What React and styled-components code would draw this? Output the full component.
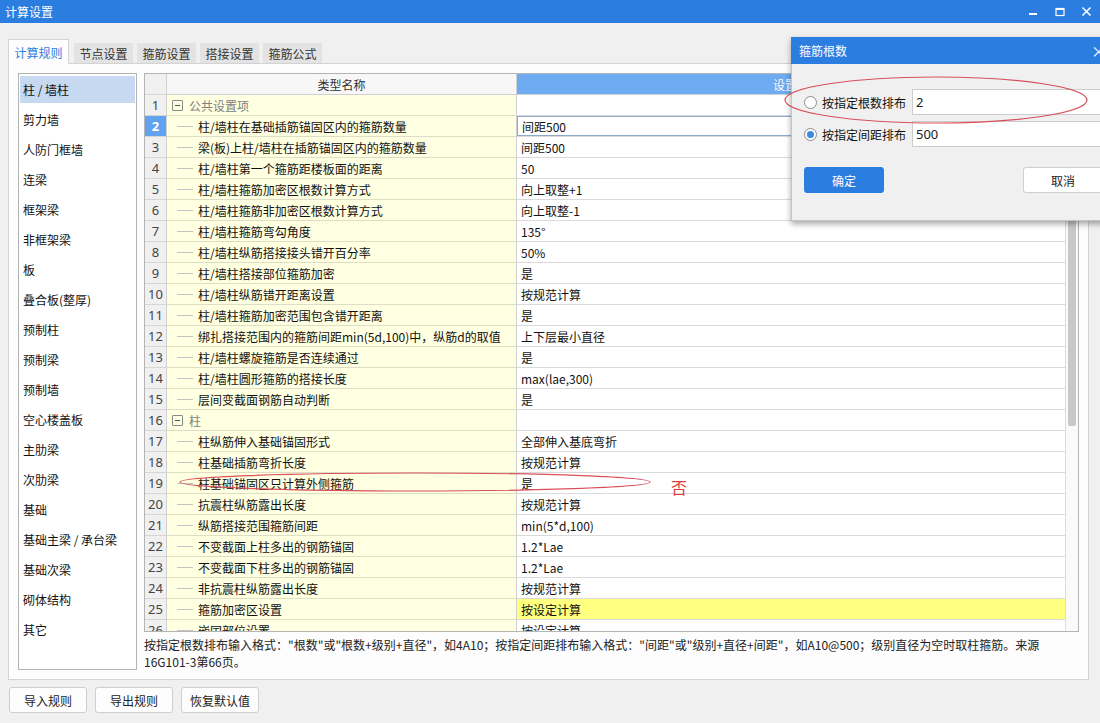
import React from 'react';
import styled, { createGlobalStyle } from 'styled-components';

const Global = createGlobalStyle`
  html, body { margin: 0; padding: 0; background: #f0f0f0; }
  body { font-family: "Noto Sans CJK SC", "Noto Sans", sans-serif; font-size: 12px; color: #222; }
  * { box-sizing: border-box; }
`;

const BLUE = '#2b7de0';

const Window = styled.div`
  width: 1100px;
  height: 723px;
  position: relative;
  overflow: hidden;
  background: #f0f0f0;
  display: flex;
  flex-direction: column;
`;

const TitleBar = styled.div`
  height: 23px;
  background: ${BLUE};
  color: #fff;
  display: flex;
  align-items: center;
  padding-left: 5px;
  font-size: 12px;
  line-height: 23px;
`;

const WinControls = styled.div`
  margin-left: auto;
  display: flex;
  height: 23px;
`;

const WinBtn = styled.div`
  width: 27px;
  height: 23px;
  display: flex;
  align-items: center;
  justify-content: center;
`;

const TabBar = styled.div`
  display: flex;
  align-items: flex-end;
  gap: 4px;
  padding-left: 8px;
  margin-top: 16px;
  height: 24px;
`;

const Tab = styled.div`
  width: ${p => (p.$active ? '61px' : '59px')};
  height: ${p => (p.$active ? '25px' : '20px')};
  margin-bottom: ${p => (p.$active ? '-1px' : '0')};
  background: ${p => (p.$active ? '#fdfdfd' : '#e3e3e3')};
  color: ${p => (p.$active ? BLUE : '#333')};
  border: ${p => (p.$active ? '1px solid #d3d3d3' : 'none')};
  border-bottom: none;
  display: flex;
  align-items: center;
  justify-content: center;
  font-size: 12px;
  position: relative;
  z-index: 1;
  margin-right: ${p => (p.$active ? '1px' : '0')};
`;

const Panel = styled.div`
  margin-left: 8px;
  width: 1081px;
  height: 617px;
  border: 1px solid #d3d3d3;
  background: #fdfdfd;
  display: flex;
  padding: 9px 0 0 9px;
  gap: 7px;
`;

const SideList = styled.div`
  width: 119px;
  height: 597px;
  border: 1px solid #b4b4b4;
  background: #fff;
  padding: 2px 1px;
`;

const SideItem = styled.div`
  height: 27px;
  margin-bottom: 3px;
  line-height: 27px;
  padding-left: 3px;
  font-size: 12px;
  color: #111;
  background: ${p => (p.$selected ? '#c6d9f0' : 'transparent')};
`;

const RightCol = styled.div`
  width: 935px;
  display: flex;
  flex-direction: column;
`;

const TableBox = styled.div`
  height: 559px;
  border: 1px solid #b4b4b4;
  background: #fff;
  display: flex;
  overflow: hidden;
`;

const Grid = styled.div`
  flex: 1;
  display: flex;
  flex-direction: column;
  overflow: hidden;
`;

const Row = styled.div`
  display: flex;
  height: 21px;
  flex-shrink: 0;
`;

const NumCell = styled.div`
  width: 22px;
  border-right: 1px solid #d0d0d0;
  border-bottom: 1px solid #d6d6d6;
  background: ${p => (p.$selected ? '#62a3ef' : '#f0f0f0')};
  color: ${p => (p.$selected ? '#fff' : '#444')};
  font-weight: ${p => (p.$selected ? 700 : 400)};
  font-family: "Noto Sans", sans-serif;
  font-size: 13px;
  display: flex;
  align-items: center;
  justify-content: center;
`;

const HeadName = styled.div`
  width: 350px;
  border-right: 1px solid #d0d0d0;
  border-bottom: 1px solid #d0d0d0;
  background: #f7f7f7;
  display: flex;
  align-items: center;
  justify-content: center;
  font-size: 12px;
  color: #333;
`;

const HeadValue = styled.div`
  flex: 1;
  border-bottom: 1px solid #d0d0d0;
  background: #6eabf0;
  color: #fff;
  display: flex;
  align-items: center;
  justify-content: center;
  font-size: 12px;
`;

const NameCell = styled.div`
  width: 350px;
  background: #ffffe1;
  border-right: 1px solid #d0d0d0;
  border-bottom: 1px solid #deddc6;
  display: flex;
  align-items: center;
  font-size: 12px;
  color: #111;
  white-space: nowrap;
  overflow: hidden;
`;

const TreeLine = styled.span`
  width: 16px;
  margin-left: 10px;
  border-top: 1px solid #c4c4c4;
  margin-right: 5px;
  flex-shrink: 0;
`;

const GroupBox = styled.span`
  width: 11px;
  height: 11px;
  margin-left: 5px;
  margin-right: 6px;
  border: 1px solid #8a8a8a;
  border-radius: 1px;
  display: flex;
  align-items: center;
  justify-content: center;
  &::after {
    content: '';
    width: 5px;
    height: 1px;
    background: #555;
  }
`;

const GroupText = styled.span`
  color: #808080;
`;

const ValueCell = styled.div`
  flex: 1;
  background: ${p => (p.$hl ? '#ffff80' : '#fff')};
  border-bottom: 1px solid #dadada;
  display: flex;
  align-items: center;
  padding-left: ${p => (p.$editing ? '5px' : '4px')};
  font-size: 12px;
  color: #111;
  white-space: nowrap;
  overflow: hidden;
  box-shadow: ${p => (p.$editing ? 'inset 0 0 0 1px #8fa9c9' : 'none')};
`;

const ScrollTrack = styled.div`
  width: 13px;
  border-left: 1px solid #dcdcdc;
  background: #fafafa;
  padding: 22px 2px 0 2px;
`;

const Thumb = styled.div`
  height: 330px;
  background: #c8c8c8;
  border-radius: 2px;
`;

const HelpText = styled.div`
  margin-top: 4px;
  line-height: 17px;
  font-size: 12px;
  color: #222;
  padding-right: 30px;
`;

const Footer = styled.div`
  display: flex;
  gap: 8px;
  padding-left: 9px;
  margin-top: 7px;
`;

const FootBtn = styled.div`
  width: 78px;
  height: 26px;
  background: #fdfdfd;
  border: 1px solid #cfcfcf;
  border-radius: 3px;
  display: flex;
  align-items: center;
  justify-content: center;
  font-size: 12px;
  color: #222;
`;

const Dialog = styled.div`
  position: absolute;
  left: 791px;
  top: 37px;
  width: 321px;
  height: 184px;
  background: #f0f0f0;
  border: 1px solid #c4c4c4;
  box-shadow: 0 3px 6px rgba(0, 0, 0, 0.35);
  display: flex;
  flex-direction: column;
`;

const DialogTitle = styled.div`
  height: 27px;
  background: ${BLUE};
  color: #fff;
  display: flex;
  align-items: center;
  padding: 0 6px 0 8px;
  font-size: 12px;
  margin: -1px -1px 0 -1px;
`;

const DialogClose = styled.span`
  margin-left: auto;
  font-size: 15px;
  color: #fff;
`;

const DialogBody = styled.div`
  padding: 25px 0 0 12px;
  display: flex;
  flex-direction: column;
  gap: 6px;
`;

const RadioRow = styled.div`
  display: flex;
  align-items: center;
  height: 26px;
`;

const Radio = styled.span`
  width: 13px;
  height: 13px;
  border-radius: 50%;
  border: 1px solid #8c8c8c;
  background: #fff;
  display: flex;
  align-items: center;
  justify-content: center;
  flex-shrink: 0;
  &::after {
    content: '';
    width: 7px;
    height: 7px;
    border-radius: 50%;
    background: ${p => (p.$checked ? '#3c8ae6' : 'transparent')};
  }
`;

const RadioLabel = styled.span`
  margin-left: 5px;
  width: 90px;
  font-size: 12px;
  color: #111;
`;

const Input = styled.div`
  flex: 1;
  height: 26px;
  border: 1px solid #cdcdcd;
  background: #fff;
  display: flex;
  align-items: center;
  padding-left: 3px;
  font-size: 13px;
  font-family: "Noto Sans", sans-serif;
  color: #222;
`;

const DialogButtons = styled.div`
  display: flex;
  gap: 139px;
  margin-top: 14px;
`;

const DlgBtn = styled.div`
  width: 80px;
  height: 26px;
  border-radius: 3px;
  display: flex;
  align-items: center;
  justify-content: center;
  font-size: 12px;
  background: ${p => (p.$primary ? BLUE : '#fff')};
  color: ${p => (p.$primary ? '#fff' : '#222')};
  border: 1px solid ${p => (p.$primary ? BLUE : '#cfcfcf')};
`;

const Overlay = styled.svg`
  position: absolute;
  left: 0;
  top: 0;
  pointer-events: none;
`;

const NoteMark = styled.div`
  position: absolute;
  left: 671px;
  top: 477px;
  color: #e23a3a;
  font-size: 16px;
  line-height: 20px;
`;

const sideItems = [
  '柱 / 墙柱', '剪力墙', '人防门框墙', '连梁', '框架梁', '非框架梁', '板', '叠合板(整厚)',
  '预制柱', '预制梁', '预制墙', '空心楼盖板', '主肋梁', '次肋梁', '基础', '基础主梁 / 承台梁',
  '基础次梁', '砌体结构', '其它',
];

const rows = [
  { g: true, name: '公共设置项', v: '' },
  { name: '柱/墙柱在基础插筋锚固区内的箍筋数量', v: '间距500', sel: true },
  { name: '梁(板)上柱/墙柱在插筋锚固区内的箍筋数量', v: '间距500' },
  { name: '柱/墙柱第一个箍筋距楼板面的距离', v: '50' },
  { name: '柱/墙柱箍筋加密区根数计算方式', v: '向上取整+1' },
  { name: '柱/墙柱箍筋非加密区根数计算方式', v: '向上取整-1' },
  { name: '柱/墙柱箍筋弯勾角度', v: '135°' },
  { name: '柱/墙柱纵筋搭接接头错开百分率', v: '50%' },
  { name: '柱/墙柱搭接部位箍筋加密', v: '是' },
  { name: '柱/墙柱纵筋错开距离设置', v: '按规范计算' },
  { name: '柱/墙柱箍筋加密范围包含错开距离', v: '是' },
  { name: '绑扎搭接范围内的箍筋间距min(5d,100)中，纵筋d的取值', v: '上下层最小直径' },
  { name: '柱/墙柱螺旋箍筋是否连续通过', v: '是' },
  { name: '柱/墙柱圆形箍筋的搭接长度', v: 'max(lae,300)' },
  { name: '层间变截面钢筋自动判断', v: '是' },
  { g: true, name: '柱', v: '' },
  { name: '柱纵筋伸入基础锚固形式', v: '全部伸入基底弯折' },
  { name: '柱基础插筋弯折长度', v: '按规范计算' },
  { name: '柱基础锚固区只计算外侧箍筋', v: '是' },
  { name: '抗震柱纵筋露出长度', v: '按规范计算' },
  { name: '纵筋搭接范围箍筋间距', v: 'min(5*d,100)' },
  { name: '不变截面上柱多出的钢筋锚固', v: '1.2*Lae' },
  { name: '不变截面下柱多出的钢筋锚固', v: '1.2*Lae' },
  { name: '非抗震柱纵筋露出长度', v: '按规范计算' },
  { name: '箍筋加密区设置', v: '按设定计算', hl: true },
  { name: '嵌固部位设置', v: '按设定计算' },
];

const tabs = ['计算规则', '节点设置', '箍筋设置', '搭接设置', '箍筋公式'];

export default function App() {
  return (
    <Window>
      <Global />
      <TitleBar>
        计算设置
        <WinControls>
          <WinBtn>
            <svg width="10" height="10" viewBox="0 0 10 10">
              <rect x="1" y="6" width="8" height="2" fill="#fff" />
            </svg>
          </WinBtn>
          <WinBtn>
            <svg width="10" height="10" viewBox="0 0 10 10">
              <rect x="1" y="1.5" width="8" height="7" fill="none" stroke="#fff" strokeWidth="1.2" />
              <rect x="1" y="1" width="8" height="2" fill="#fff" />
            </svg>
          </WinBtn>
          <WinBtn>
            <svg width="11" height="11" viewBox="0 0 11 11">
              <path d="M1.5 1.5 L9.5 9.5 M9.5 1.5 L1.5 9.5" stroke="#fff" strokeWidth="1.6" />
            </svg>
          </WinBtn>
        </WinControls>
      </TitleBar>

      <TabBar>
        {tabs.map((t, i) => (
          <Tab key={t} $active={i === 0}>{t}</Tab>
        ))}
      </TabBar>

      <Panel>
        <SideList>
          {sideItems.map((s, i) => (
            <SideItem key={s} $selected={i === 0}>{s}</SideItem>
          ))}
        </SideList>
        <RightCol>
          <TableBox>
            <Grid>
              <Row>
                <NumCell />
                <HeadName>类型名称</HeadName>
                <HeadValue>设置值</HeadValue>
              </Row>
              {rows.map((r, i) => (
                <Row key={i}>
                  <NumCell $selected={r.sel}>{i + 1}</NumCell>
                  <NameCell>
                    {r.g ? (
                      <>
                        <GroupBox />
                        <GroupText>{r.name}</GroupText>
                      </>
                    ) : (
                      <>
                        <TreeLine />
                        {r.name}
                      </>
                    )}
                  </NameCell>
                  <ValueCell $hl={r.hl} $editing={r.sel}>{r.v}</ValueCell>
                </Row>
              ))}
            </Grid>
            <ScrollTrack>
              <Thumb />
            </ScrollTrack>
          </TableBox>
          <HelpText>
            按指定根数排布输入格式："根数"或"根数+级别+直径"，如4A10；按指定间距排布输入格式："间距"或"级别+直径+间距"，如A10@500；级别直径为空时取柱箍筋。来源16G101-3第66页。
          </HelpText>
        </RightCol>
      </Panel>

      <Footer>
        <FootBtn>导入规则</FootBtn>
        <FootBtn>导出规则</FootBtn>
        <FootBtn>恢复默认值</FootBtn>
      </Footer>

      <Dialog>
        <DialogTitle>
          箍筋根数
          <DialogClose>×</DialogClose>
        </DialogTitle>
        <DialogBody>
          <RadioRow>
            <Radio />
            <RadioLabel>按指定根数排布</RadioLabel>
            <Input>2</Input>
          </RadioRow>
          <RadioRow>
            <Radio $checked />
            <RadioLabel>按指定间距排布</RadioLabel>
            <Input>500</Input>
          </RadioRow>
          <DialogButtons>
            <DlgBtn $primary>确定</DlgBtn>
            <DlgBtn>取消</DlgBtn>
          </DialogButtons>
        </DialogBody>
      </Dialog>

      <Overlay width="1100" height="723" viewBox="0 0 1100 723">
        <ellipse cx="936" cy="100" rx="151" ry="23" fill="none" stroke="#d9505a" strokeWidth="1.2" />
        <ellipse cx="415" cy="482" rx="235" ry="9" fill="none" stroke="#d9505a" strokeWidth="1.2" />
      </Overlay>
      <NoteMark>否</NoteMark>
    </Window>
  );
}
